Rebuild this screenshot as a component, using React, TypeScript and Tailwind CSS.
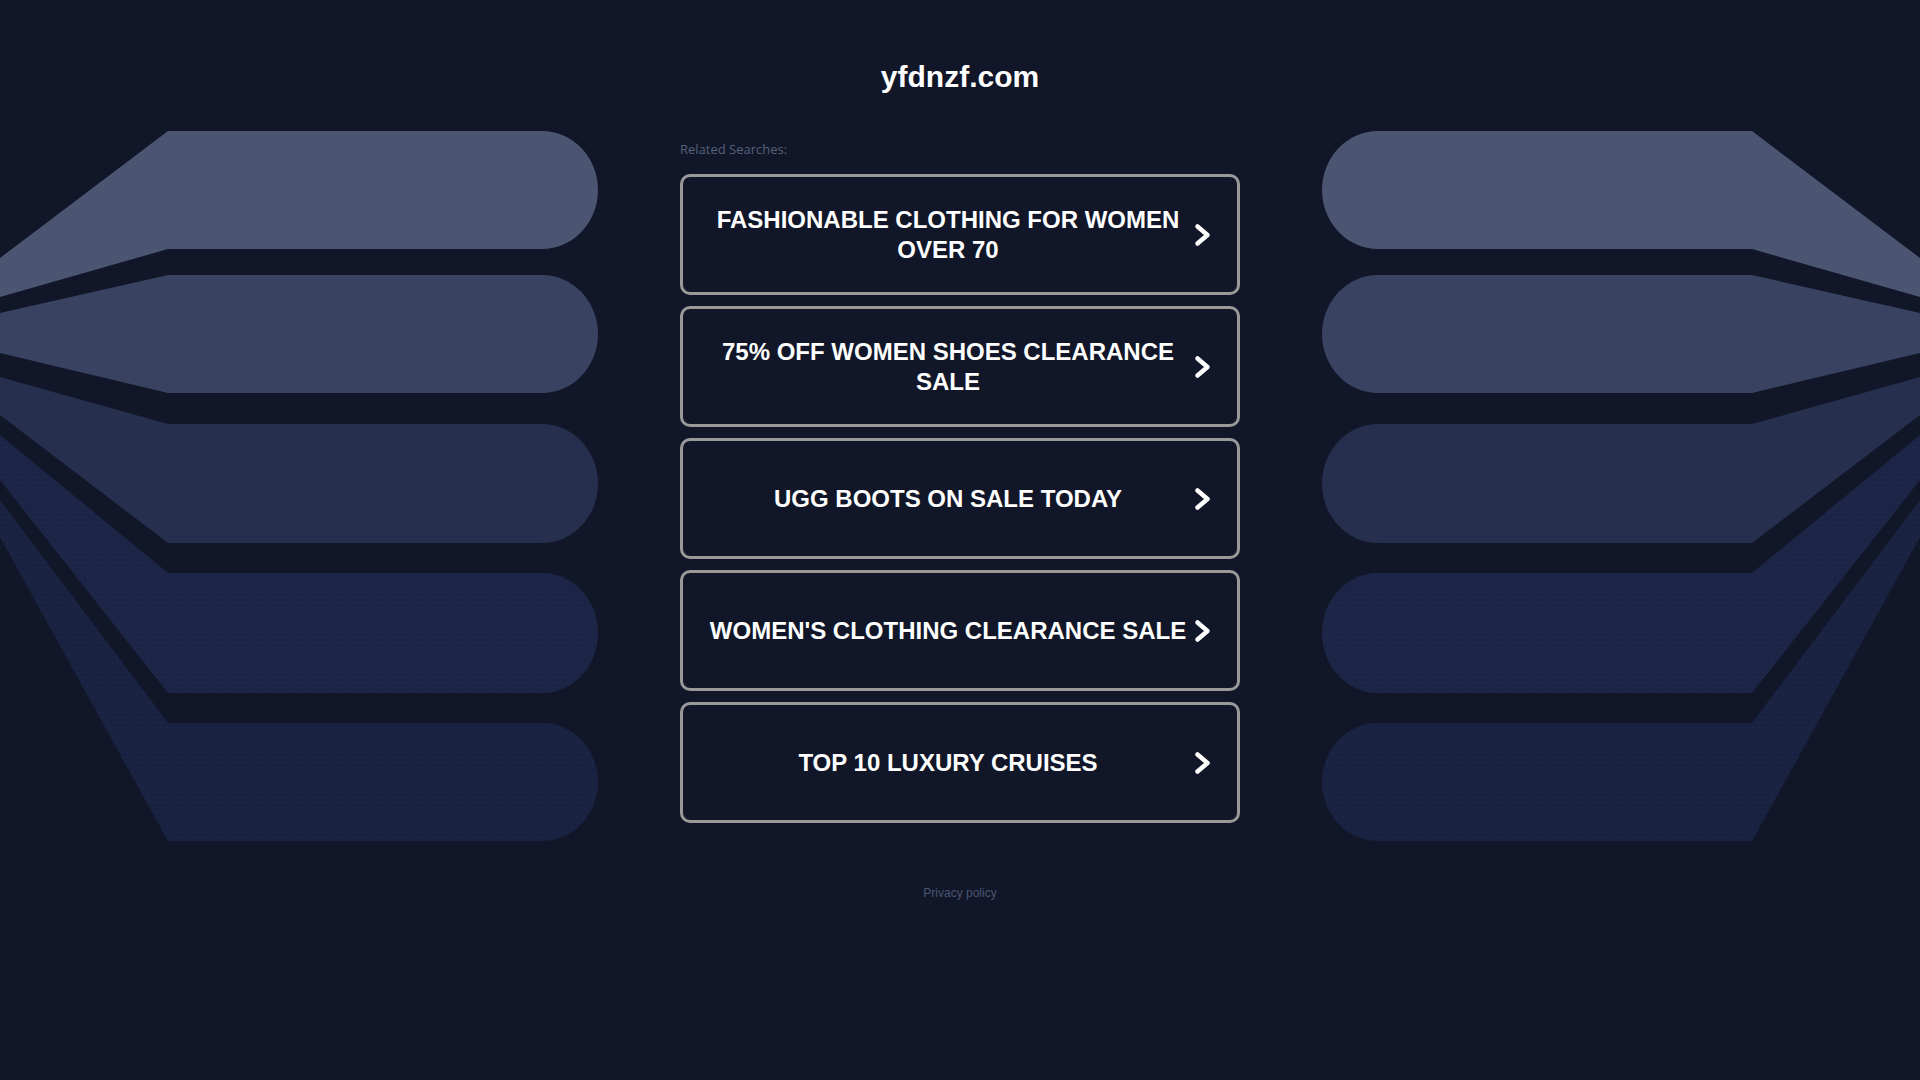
import React from 'react';

const searches = [
  'FASHIONABLE CLOTHING FOR WOMEN OVER 70',
  '75% OFF WOMEN SHOES CLEARANCE SALE',
  'UGG BOOTS ON SALE TODAY',
  "WOMEN'S CLOTHING CLEARANCE SALE",
  'TOP 10 LUXURY CRUISES',
];

// bands of the backdrop: top/bottom at the bend, top/bottom where they meet the page edge
const bands = [
  { t: 131, b: 249, l1: 258, l2: 297, fill: '#4b5572' },
  { t: 275, b: 393, l1: 313, l2: 353, fill: '#394361' },
  { t: 424, b: 543, l1: 377, l2: 415, fill: '#262f4d' },
  { t: 573, b: 693, l1: 435, l2: 480, fill: 'url(#dotsA)' },
  { t: 723, b: 841, l1: 500, l2: 537, fill: 'url(#dotsB)' },
];

function bandPath(t: number, b: number, l1: number, l2: number) {
  const ry = (b - t) / 2;
  return `M0 ${l1} L168 ${t} L542 ${t} A56 ${ry} 0 0 1 542 ${b} L168 ${b} L0 ${l2} Z`;
}

function Backdrop() {
  const shapes = bands.map((s, i) => (
    <path key={i} d={bandPath(s.t, s.b, s.l1, s.l2)} fill={s.fill} />
  ));
  return (
    <svg
      className="absolute inset-0 w-full h-[1080px] pointer-events-none"
      viewBox="0 0 1920 1080"
      preserveAspectRatio="none"
    >
      <defs>
        <pattern id="dotsA" width="5" height="5" patternUnits="userSpaceOnUse">
          <rect width="5" height="5" fill="#1c2546" />
          <circle cx="2.5" cy="2.5" r="0.6" fill="#232e55" />
        </pattern>
        <pattern id="dotsB" width="5" height="5" patternUnits="userSpaceOnUse">
          <rect width="5" height="5" fill="#1a2242" />
          <circle cx="2.5" cy="2.5" r="0.6" fill="#212b50" />
        </pattern>
      </defs>
      <g>{shapes}</g>
      <g transform="translate(1920 0) scale(-1 1)">{shapes}</g>
    </svg>
  );
}

function Chevron() {
  return (
    <svg width="17" height="24" viewBox="0 0 17 24" className="ml-[4px] shrink-0">
      <path
        d="M3.5 3.5 L13.5 12 L3.5 20.5"
        fill="none"
        stroke="#ffffff"
        strokeWidth="4.5"
        strokeLinecap="round"
        strokeLinejoin="round"
      />
    </svg>
  );
}

export default function App() {
  return (
    <div className="relative min-h-[1080px] w-full bg-[#111729] overflow-hidden">
      <Backdrop />

      <div className="relative flex flex-col items-center">
        {/* Domain */}
        <h1 className="mt-[60px] text-[30px] leading-[34px] font-bold text-white font-['Liberation_Sans',Arial,sans-serif]">
          yfdnzf.com
        </h1>

        <div className="w-[560px]">
          <p className="mt-[47px] text-[13px] leading-[17px] text-[#566079] font-['Open_Sans',sans-serif]">
            Related Searches:
          </p>

          {/* Search links */}
          <div className="mt-[16px] flex flex-col gap-[11px]">
            {searches.map((s, i) => (
              <a
                key={i}
                href="#"
                className="flex items-center h-[121px] border-[3px] border-[#999999] rounded-[10px] pl-[23px] pr-[26px]"
              >
                <span className="w-[484px] text-center text-[24px] leading-[30px] font-bold text-white font-['Liberation_Sans',Arial,sans-serif]">
                  {s}
                </span>
                <Chevron />
              </a>
            ))}
          </div>
        </div>

        <a
          href="#"
          className="mt-[63px] text-[12px] leading-[14px] text-[#4b5472] font-['Liberation_Sans',Arial,sans-serif]"
        >
          Privacy policy
        </a>
      </div>
    </div>
  );
}
